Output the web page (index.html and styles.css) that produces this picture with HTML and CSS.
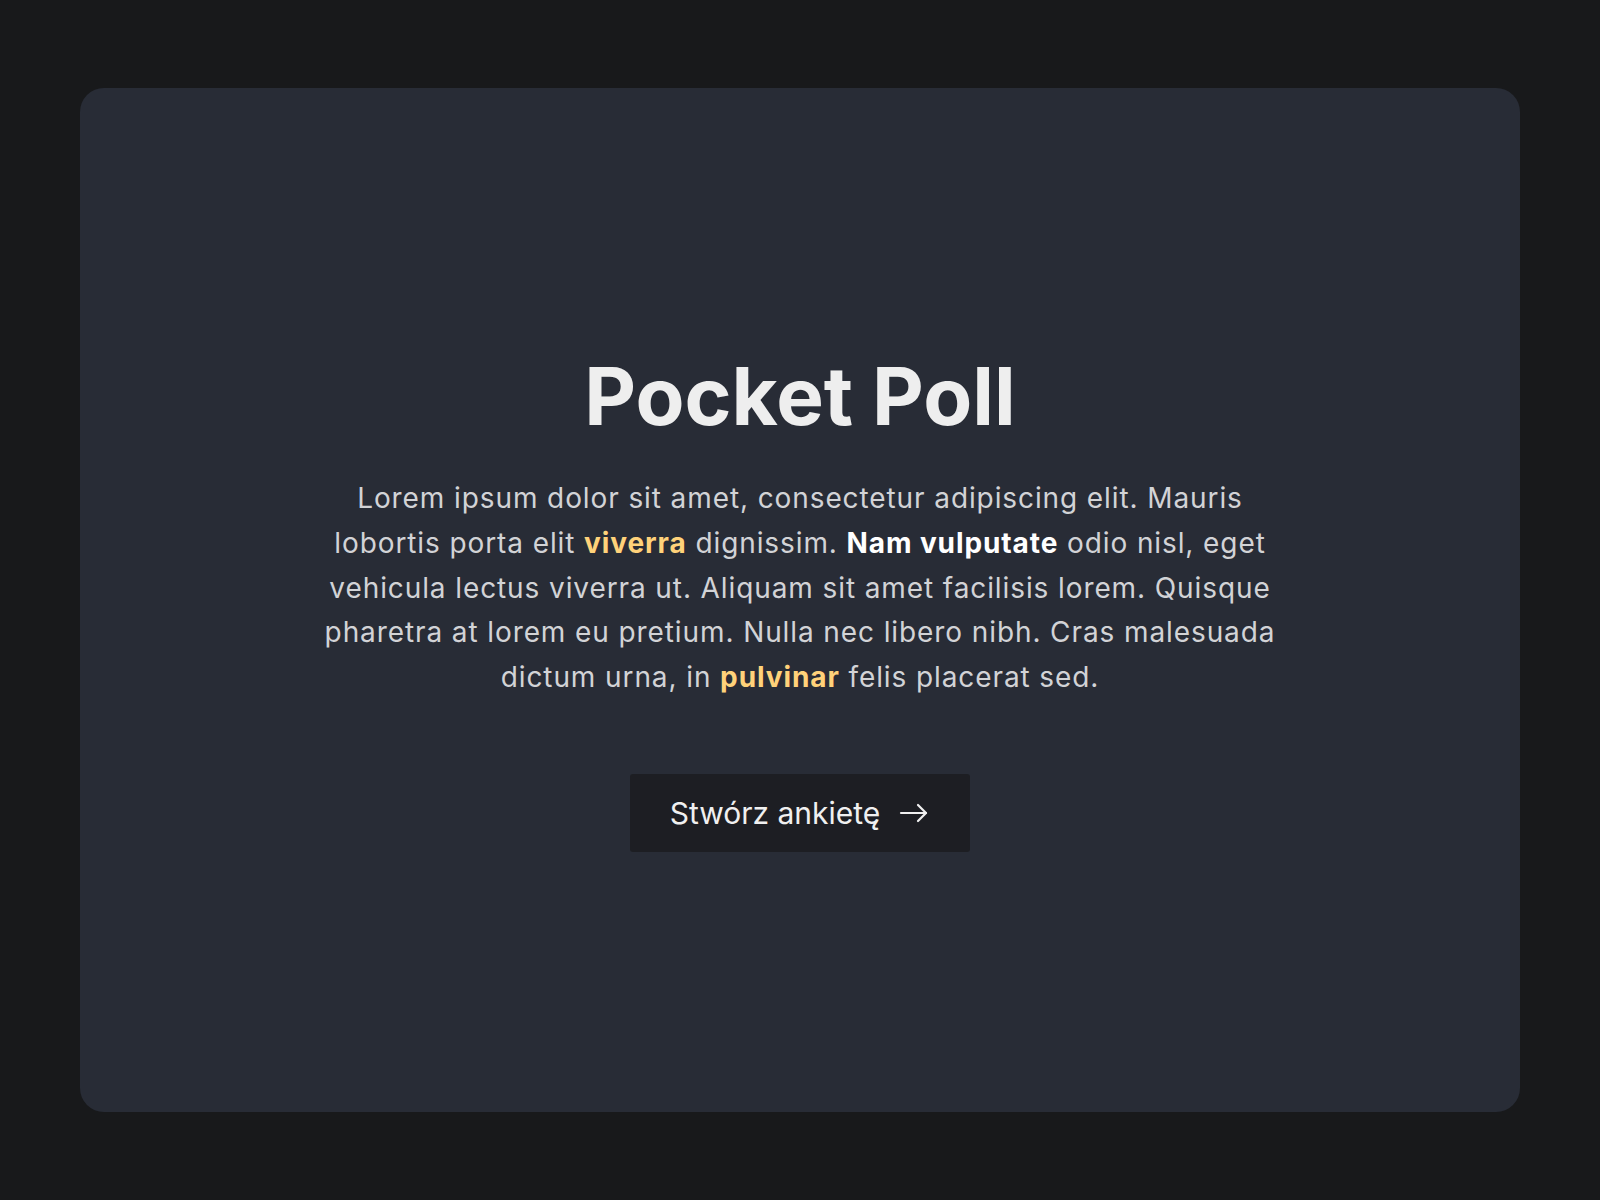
FILE: index.html
```html
<!DOCTYPE html>
<html lang="pl">
<head>
<meta charset="utf-8">
<title>Pocket Poll</title>
<link rel="stylesheet" href="styles.css">
</head>
<body>
<main class="card">
  <h1 class="title">Pocket Poll</h1>
  <p class="lead">Lorem ipsum dolor sit amet, consectetur adipiscing elit. Mauris lobortis porta elit <strong class="accent">viverra</strong> dignissim. <strong class="strong">Nam vulputate</strong> odio nisl, eget vehicula lectus viverra ut. Aliquam sit amet facilisis lorem. Quisque pharetra at lorem eu pretium. Nulla nec libero nibh. Cras malesuada dictum urna, in <strong class="accent">pulvinar</strong> felis placerat sed.</p>
  <a class="btn" href="#">Stwórz ankietę
    <svg class="btn-icon" width="32" height="32" viewBox="0 0 32 32" fill="none" stroke="currentColor" stroke-width="2.2" stroke-linecap="round" stroke-linejoin="round"><path d="M3 16h25"/><path d="M20 8l8 8-8 8"/></svg>
  </a>
</main>
</body>
</html>
```

FILE: styles.css
```css
html, body {
  margin: 0;
  height: 100%;
}
body {
  background: #18191b;
  font-family: Inter, "Noto Sans", sans-serif;
  box-sizing: border-box;
  padding: 88px 80px;
  display: flex;
}
.card {
  flex: 1;
  background: #282c36;
  border-radius: 24px;
  display: flex;
  flex-direction: column;
  align-items: center;
  justify-content: center;
  text-align: center;
}
.title {
  margin: 0 0 32px;
  font-size: 80px;
  line-height: 1.2;
  font-weight: 700;
  color: #eeeeee;
}
.lead {
  margin: 0 0 74px;
  max-width: 960px;
  font-size: 28px;
  line-height: 1.6;
  letter-spacing: 0.9px;
  color: #d2d3d6;
}
.accent {
  color: #ffd27a;
  font-weight: 700;
}
.strong {
  color: #ffffff;
  font-weight: 700;
}
.btn {
  display: inline-flex;
  align-items: center;
  gap: 18px;
  padding: 20px 40px;
  background: #1d1e23;
  border-radius: 3px;
  color: #f0f0f0;
  text-decoration: none;
  font-size: 30px;
  line-height: 38px;
}
.btn-icon {
  display: block;
}
```
